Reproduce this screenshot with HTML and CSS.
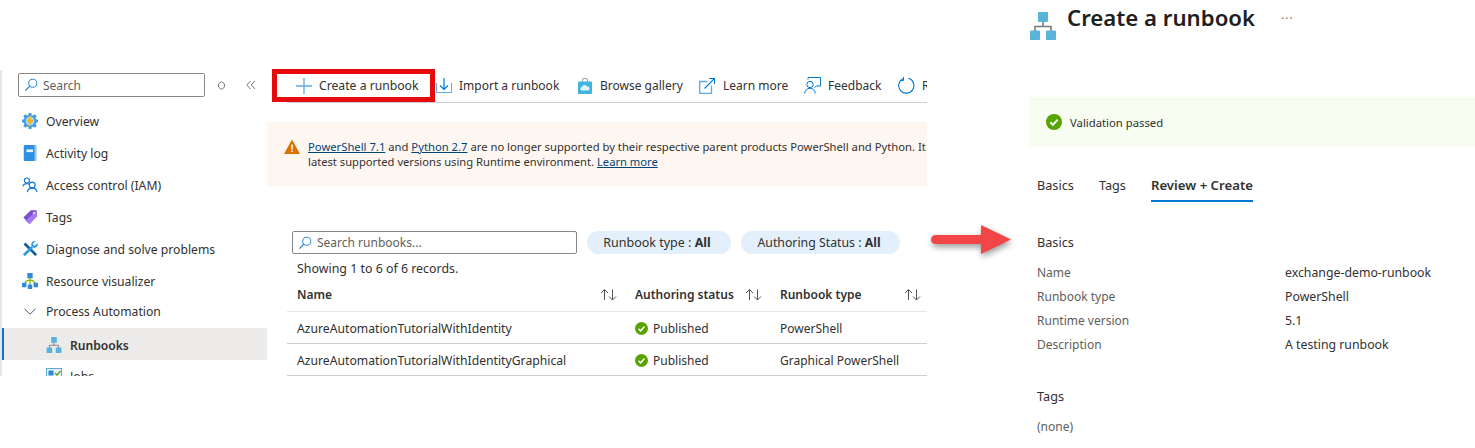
FILE: index.html
```html
<!DOCTYPE html>
<html lang="en">
<head>
<meta charset="utf-8">
<title>Create a runbook</title>
<link rel="stylesheet" href="styles.css">
</head>
<body>
<svg class="defs" width="0" height="0" aria-hidden="true">
  <symbol id="tree" viewBox="0 0 26 28">
    <path d="M13 10v4.500M5 19v-4.500h16V19" fill="none" stroke="#7a7a7a" stroke-width="1.600"/>
    <rect x="8" y="0" width="10" height="10" rx="1" fill="#59b4d9"/>
    <rect x="0" y="18.500" width="10" height="9.500" rx="1" fill="#59b4d9"/>
    <rect x="16" y="18.500" width="10" height="9.500" rx="1" fill="#59b4d9"/>
  </symbol>
  <symbol id="check" viewBox="0 0 16 16">
    <circle cx="8" cy="8" r="8" fill="#57a300"/>
    <path d="M4.300 8.300l2.600 2.500 4.800-5.200" fill="none" stroke="#fff" stroke-width="1.900"/>
  </symbol>
  <symbol id="find" viewBox="0 0 16 16">
    <circle cx="10" cy="6" r="4.600" fill="none" stroke="#0078d4" stroke-width="1"/>
    <path d="M6.600 9.400L1.500 14.500" stroke="#0078d4" stroke-width="1.200"/>
  </symbol>
  <symbol id="sort" viewBox="0 0 17 13">
    <path d="M4.500 12V1.500M1 5l3.500-3.500L8 5" fill="none" stroke="#555" stroke-width="1"/>
    <path d="M12.500 1.500V12M9 8.500l3.500 3.500L16 8.500" fill="none" stroke="#555" stroke-width="1"/>
  </symbol>
</svg>

<div class="page">
  <aside class="sidebar">
    <div class="side-tools">
      <label class="search side-search">
        <svg class="i14"><use href="#find"/></svg>
        <span class="ph">Search</span>
      </label>
      <svg class="diamond" viewBox="0 0 7 9"><path d="M3.500.6L6.400 2.800V6.200L3.500 8.400.6 6.200V2.800z" fill="none" stroke="#777"/></svg>
      <svg class="collapse" viewBox="0 0 10 10"><path d="M4.500 1L.8 5l3.700 4M9 1L5.300 5 9 9" fill="none" stroke="#777"/></svg>
    </div>
    <nav class="nav">
      <a class="nav-item">
        <svg class="nav-icon" viewBox="0 0 18 18">
          <path d="M7.500 0h3l.4 2.200 1.500.6L14.300 1.500l2.200 2.200-1.300 1.900.6 1.500L18 7.500v3l-2.200.4-.6 1.500 1.300 1.900-2.200 2.200-1.900-1.300-1.500.6-.4 2.200h-3l-.4-2.200-1.500-.6-1.900 1.300-2.200-2.200 1.300-1.900-.6-1.500L0 10.500v-3l2.200-.4.6-1.500L1.500 3.700l2.200-2.200 1.900 1.300 1.500-.6z" fill="#3c9ce8"/>
          <circle cx="9" cy="9" r="5" fill="#a6d5f7"/>
          <path d="M11 1L5 10.200h3.300L6 17l7.500-9.500H10z" fill="#fcb414"/>
        </svg>
        <span>Overview</span>
      </a>
      <a class="nav-item">
        <svg class="nav-icon" viewBox="0 0 18 18">
          <rect x="2" y="0" width="14" height="18" rx="1.500" fill="#2f8fe0"/>
          <rect x="14" y="0" width="2" height="18" fill="#8dc6f0"/>
          <rect x="5" y="5" width="7.500" height="3" fill="#e8f3fc"/>
        </svg>
        <span>Activity log</span>
      </a>
      <a class="nav-item">
        <svg class="nav-icon" viewBox="0 0 18 18" fill="none" stroke="#1277d6" stroke-width="1.300">
          <circle cx="5.500" cy="4" r="2.900"/>
          <path d="M1 10.500c.6-2 2-3 4.500-3 .8 0 1.400.1 2 .4"/>
          <circle cx="11.500" cy="9" r="3.300"/>
          <path d="M6 17c.4-2.800 2.500-4.500 5.500-4.500s5 1.700 5.500 4.500"/>
        </svg>
        <span>Access control (IAM)</span>
      </a>
      <a class="nav-item">
        <svg class="nav-icon" viewBox="0 0 18 18">
          <path d="M1.500 9.500L10 1.500h6.500v7L8.500 17z" fill="#7b4fc9"/>
          <path d="M4 13.500l9-9 3.500-3v7L8.500 17z" fill="#a67af4"/>
          <circle cx="13.500" cy="4.500" r="1.300" fill="#e5d8fb"/>
        </svg>
        <span>Tags</span>
      </a>
      <a class="nav-item">
        <svg class="nav-icon" viewBox="0 0 18 18">
          <path d="M1.800 3.800L3.800 1.800 17 15l-2 2z" fill="#0b5f94"/>
          <path d="M1 15l9.500-9.500 2.200 2.200L3.200 17.200z" fill="#2f9be4"/>
          <path d="M17.500 2.500L14.800 5.200l-2-.4-.4-2L15.200.2c-2.800-.8-5.400 1.800-4.700 4.800l2.700 2.700c3 .6 5.500-2.200 4.300-5.200z" fill="#2f9be4"/>
        </svg>
        <span>Diagnose and solve problems</span>
      </a>
      <a class="nav-item">
        <svg class="nav-icon" viewBox="0 0 18 18">
          <path d="M9 5v8M3 13c.5-3 3-5 6-5s5.500 2 6 5" fill="none" stroke="#7fba00" stroke-width="1.500"/>
          <rect x="6" y="0" width="6" height="6" rx=".6" fill="#2f88d8"/>
          <rect x="0" y="11" width="5" height="5" rx=".6" fill="#2f88d8"/>
          <rect x="6.500" y="13" width="5" height="5" rx=".6" fill="#2f88d8"/>
          <rect x="13" y="11" width="5" height="5" rx=".6" fill="#2f88d8"/>
        </svg>
        <span>Resource visualizer</span>
      </a>
      <a class="nav-item nav-group">
        <svg class="chevron" viewBox="0 0 12 7"><path d="M.5.800L6 6.200 11.500.800" fill="none" stroke="#555"/></svg>
        <span>Process Automation</span>
      </a>
      <a class="nav-item nav-sub nav-active">
        <svg class="sub-icon"><use href="#tree"/></svg>
        <span>Runbooks</span>
      </a>
      <a class="nav-item nav-sub nav-clipped">
        <svg class="sub-icon" viewBox="0 0 16 16">
          <rect x=".5" y=".5" width="15" height="15" fill="#e8f3fa" stroke="#59a9d9"/>
          <rect x="2.500" y="2.500" width="5" height="5" fill="#2f88d8"/>
          <path d="M9 5l2 2 3.500-4" fill="none" stroke="#57a300" stroke-width="1.300"/>
        </svg>
        <span>Jobs</span>
      </a>
    </nav>
  </aside>

  <main class="middle">
    <div class="toolbar">
      <button class="tool tool-primary">
        <svg class="i16" viewBox="0 0 16 16"><path d="M8 0v16M0 8h16" stroke="#5ea9e6" stroke-width="1.300"/></svg>
        <span>Create a runbook</span>
      </button>
      <button class="tool">
        <svg class="i16" viewBox="0 0 16 16" fill="none"><path d="M8 0v11M4 7.500L8 11.500l4-4" stroke="#0078d4" stroke-width="1.200"/><path d="M.5 5v9.500h15V5" stroke="#5ea9e6"/></svg>
        <span>Import a runbook</span>
      </button>
      <button class="tool">
        <svg class="i16" viewBox="0 0 16 16"><path d="M5.500 4V2.500a2.500 2.500 0 0 1 5 0V4" fill="none" stroke="#8a8a8a"/><rect x="1" y="3.500" width="14" height="12.500" rx="1" fill="#3db5dc"/><path d="M4.500 12.500a1.800 1.800 0 0 1 .4-3.500 2.800 2.800 0 0 1 5.300-.4 2 2 0 0 1 1 3.900z" fill="#dff3fa"/></svg>
        <span>Browse gallery</span>
      </button>
      <button class="tool tool-learn">
        <svg class="i16" viewBox="0 0 16 16" fill="none"><path d="M8.500 3.500H.7v11.800h11.800V7.500" stroke="#5ea9e6" stroke-width="1.300"/><path d="M5.500 10.500L15.500.5M10 .5h5.500V6" stroke="#0078d4" stroke-width="1.100"/></svg>
        <span>Learn more</span>
      </button>
      <button class="tool">
        <svg class="i17" viewBox="0 0 17 17" fill="none" stroke="#0078d4"><path d="M4 2.500V.5h12.500v8.500h-4l-2 1.500"/><circle cx="6" cy="7.500" r="3.200"/><path d="M.7 16.500c.3-3.300 2.300-5.200 5.300-5.200s5 1.900 5.300 5.200"/></svg>
        <span>Feedback</span>
      </button>
      <button class="tool">
        <svg class="i17" viewBox="0 0 17 17" fill="none" stroke="#0078d4" stroke-width="1.100"><path d="M10.500 1.300A7.600 7.600 0 1 1 5.500 1.500"/><path d="M5.500 0v3.500H2" stroke-width="1"/></svg>
        <span>Refresh</span>
      </button>
    </div>

    <div class="notice">
      <svg class="warn" viewBox="0 0 16 15"><path d="M8 .5L16 15H0z" fill="#d97200"/><path d="M8 5.500v5M8 11.500v1.500" stroke="#fff" stroke-width="1.500"/></svg>
      <div class="notice-text">
        <p class="line-one"><a>PowerShell 7.1</a> and <a>Python 2.7</a> are no longer supported by their respective parent products PowerShell and Python. It is recommended to update to the</p>
        <p class="line-two">latest supported versions using Runtime environment. <a>Learn more</a></p>
      </div>
    </div>

    <div class="filters">
      <label class="search list-search">
        <svg class="i14"><use href="#find"/></svg>
        <span class="ph">Search runbooks...</span>
      </label>
      <span class="pill pill-type">Runbook type : <b>All</b></span>
      <span class="pill pill-status">Authoring Status : <b>All</b></span>
    </div>
    <div class="count">Showing 1 to 6 of 6 records.</div>

    <table class="grid">
      <colgroup><col class="c1"><col class="c2"><col class="c3"></colgroup>
      <thead>
        <tr>
          <th><div class="th-in">Name<svg class="sort"><use href="#sort"/></svg></div></th>
          <th><div class="th-in">Authoring status<svg class="sort"><use href="#sort"/></svg></div></th>
          <th class="th-last"><div class="th-in">Runbook type<svg class="sort"><use href="#sort"/></svg></div></th>
        </tr>
      </thead>
      <tbody>
        <tr>
          <td class="td-name">AzureAutomationTutorialWithIdentity</td>
          <td><div class="status"><svg class="i12"><use href="#check"/></svg>Published</div></td>
          <td>PowerShell</td>
        </tr>
        <tr>
          <td class="td-name">AzureAutomationTutorialWithIdentityGraphical</td>
          <td><div class="status"><svg class="i12"><use href="#check"/></svg>Published</div></td>
          <td>Graphical PowerShell</td>
        </tr>
      </tbody>
    </table>
  </main>

  <div class="arrow-col">
    <svg class="arrow" viewBox="0 0 90 40">
      <path d="M4.500 12H50V2l30 14.500L50 31V21H4.500a4.500 4.500 0 0 1 0-9z" fill="#f24545"/>
    </svg>
  </div>

  <section class="panel">
    <header class="panel-head">
      <svg class="panel-icon"><use href="#tree"/></svg>
      <h1>Create a runbook</h1>
      <span class="more">···</span>
    </header>
    <div class="passed">
      <svg class="i16"><use href="#check"/></svg>
      <span>Validation passed</span>
    </div>
    <div class="tabs">
      <span class="tab">Basics</span>
      <span class="tab">Tags</span>
      <span class="tab tab-active">Review + Create</span>
    </div>
    <h2 class="sec sec-basics">Basics</h2>
    <dl class="summary">
      <dt>Name</dt><dd>exchange-demo-runbook</dd>
      <dt>Runbook type</dt><dd>PowerShell</dd>
      <dt>Runtime version</dt><dd>5.1</dd>
      <dt>Description</dt><dd>A testing runbook</dd>
    </dl>
    <h2 class="sec sec-tags">Tags</h2>
    <div class="none">(none)</div>
  </section>
</div>
</body>
</html>
```

FILE: styles.css
```css
* { box-sizing: border-box; }
html, body { margin: 0; padding: 0; background: #fff; }
body {
  font-family: "Noto Sans", "Open Sans", "Liberation Sans", sans-serif;
  font-size: 12px;
  color: #323130;
  width: 1475px;
  height: 448px;
  overflow: hidden;
}
.defs { position: absolute; }
svg { display: block; flex: none; }
.i12 { width: 13px; height: 13px; }
.i14 { width: 14px; height: 14px; }
.i16 { width: 16px; height: 16px; }
.i17 { width: 17px; height: 17px; }

.page { display: flex; align-items: flex-start; height: 448px; }

/* Sidebar */
.sidebar {
  width: 267px;
  height: 306px;
  margin-top: 70px;
  overflow: hidden;
  border-left: 2px solid #e6e6e6;
  flex: none;
}
.side-tools {
  display: flex;
  align-items: flex-start;
  padding: 3px 0 0 16px;
  height: 35px;
}
.search {
  display: flex;
  align-items: center;
  gap: 5px;
  height: 24px;
  border: 1px solid #8a8886;
  border-radius: 2px;
  background: #fff;
  padding-left: 5px;
}
.ph { color: #605e5c; }
.side-search { width: 187px; }
.diamond { width: 7px; height: 9px; margin: 8px 0 0 13px; }
.collapse { width: 10px; height: 10px; margin: 7px 0 0 21px; }
.nav { font-size: 12.2px; }
.nav-item {
  display: flex;
  align-items: center;
  gap: 7px;
  height: 32px;
  padding-left: 19px;
  white-space: nowrap;
}
.nav-icon { width: 16px; height: 16px; margin-left: 1px; margin-right: 1px; }
.chevron { width: 12px; height: 7px; margin: 0 3px; }
.nav-group { height: 28px; }
.nav-sub { padding-left: 44px; gap: 8px; }
.sub-icon { width: 16px; height: 16px; }
.nav-active {
  margin-top: 3px;
  background: #edebe9;
  border-left: 2px solid #0078d4;
  padding-left: 42px;
  padding-top: 2px;
  font-weight: 600;
  font-size: 12.1px;
}

/* Middle */
.middle { width: 660px; margin-top: 69px; flex: none; overflow: hidden; }
.toolbar {
  display: grid;
  grid-template-columns: 169px 141px 122px 105px 94px 29px;
  height: 34px;
  background: linear-gradient(#cfcfcf, #cfcfcf) no-repeat 20px 100% / 640px 1px;
}
.tool {
  display: flex;
  align-items: center;
  gap: 7px;
  height: 33px;
  background: none;
  border: 0;
  padding: 0;
  font: inherit;
  color: inherit;
  white-space: nowrap;
  overflow: hidden;
}
.tool-learn { gap: 8px; }
.tool-primary {
  margin-left: 5px;
  width: 163px;
  border: 5px solid #e60a0a;
  padding-left: 19px;
  font-size: 12.2px;
}
.notice {
  display: flex;
  gap: 8px;
  margin-top: 19px;
  height: 64px;
  padding: 17px 0 0 17px;
  background: #fef7f1;
  white-space: nowrap;
  overflow: hidden;
}
.notice p { margin: 0; line-height: 16px; }
.notice .line-one { font-size: 11.25px; height: 15px; }
.notice .line-two { font-size: 11.2px; }
.notice a { color: #004578; text-decoration: underline; }
.warn { width: 16px; height: 15px; }

.filters {
  display: flex;
  gap: 10px;
  margin: 45px 0 0 25px;
}
.list-search { width: 285px; height: 23px; }
.pill {
  height: 23px;
  line-height: 23px;
  border-radius: 12px;
  background: #e3f0fb;
  text-align: center;
  white-space: nowrap;
}
.pill b { font-weight: 700; }
.pill-type { width: 144px; font-size: 12.5px; padding-right: 4px; }
.pill-status { width: 159px; font-size: 12.3px; padding-right: 3px; }
.count {
  margin: 6px 0 0 30px;
  height: 17px;
  line-height: 17px;
  font-size: 12.4px;
}

.grid {
  margin-left: 20px;
  width: 640px;
  table-layout: fixed;
  border-collapse: separate;
  border-spacing: 0;
}
.c1 { width: 338px; }
.c2 { width: 145px; }
.c3 { width: 157px; }
.grid th {
  height: 35px;
  padding: 0 8px 0 10px;
  text-align: left;
  font-weight: 600;
  border-bottom: 1px solid #e6e6e6;
}
.grid .th-last { padding-right: 6px; }
.grid td {
  height: 32px;
  padding: 1px 0 0 10px;
  border-bottom: 1px solid #cfcfcf;
  white-space: nowrap;
}
.grid .td-name { font-size: 12.2px; }
.th-in { display: flex; align-items: center; justify-content: space-between; }
.sort { width: 17px; height: 13px; }
.status { display: flex; align-items: center; gap: 5px; }

/* Arrow */
.arrow-col { width: 102px; flex: none; padding: 223px 0 0 4px; }
.arrow { width: 90px; height: 40px; filter: drop-shadow(1px 3px 3px rgba(0,0,0,.4)); }

/* Panel */
.panel { flex: 1; min-width: 0; }
.panel-head { display: flex; height: 97px; padding-left: 1px; }
.panel-icon { width: 26px; height: 28px; margin-top: 12px; }
h1 {
  margin: 2px 0 0 11px;
  font-size: 22.2px;
  line-height: 32px;
  font-weight: 600;
  color: #201f1e;
  white-space: nowrap;
  height: 32px;
}
.more {
  margin: 9px 0 0 26px;
  color: #777;
  font-size: 12px;
  line-height: 20px;
  letter-spacing: 1px;
}
.passed {
  display: flex;
  align-items: center;
  gap: 8px;
  height: 50px;
  padding-left: 17px;
  background: #f7fdf1;
  font-size: 11.3px;
}
.tabs {
  display: flex;
  gap: 25px;
  margin: 27px 0 0 8px;
  height: 28px;
  font-size: 12.7px;
}
.tab { height: 28px; line-height: 23px; }
.tab-active {
  font-weight: 600;
  font-size: 13.2px;
  border-bottom: 2px solid #0078d4;
}
.sec {
  margin: 0 0 0 8px;
  font-size: 12.7px;
  font-weight: 400;
  line-height: 20px;
}
.sec-basics { margin-top: 30px; }
.sec-tags { margin-top: 30px; }
.summary {
  display: grid;
  grid-template-columns: 248px 1fr;
  grid-auto-rows: 24px;
  align-items: center;
  margin: 8px 0 0 8px;
}
dt { color: #605e5c; }
dd { margin: 0; font-size: 12.3px; }
.none { margin: 11px 0 0 8px; line-height: 20px; color: #605e5c; }
```
